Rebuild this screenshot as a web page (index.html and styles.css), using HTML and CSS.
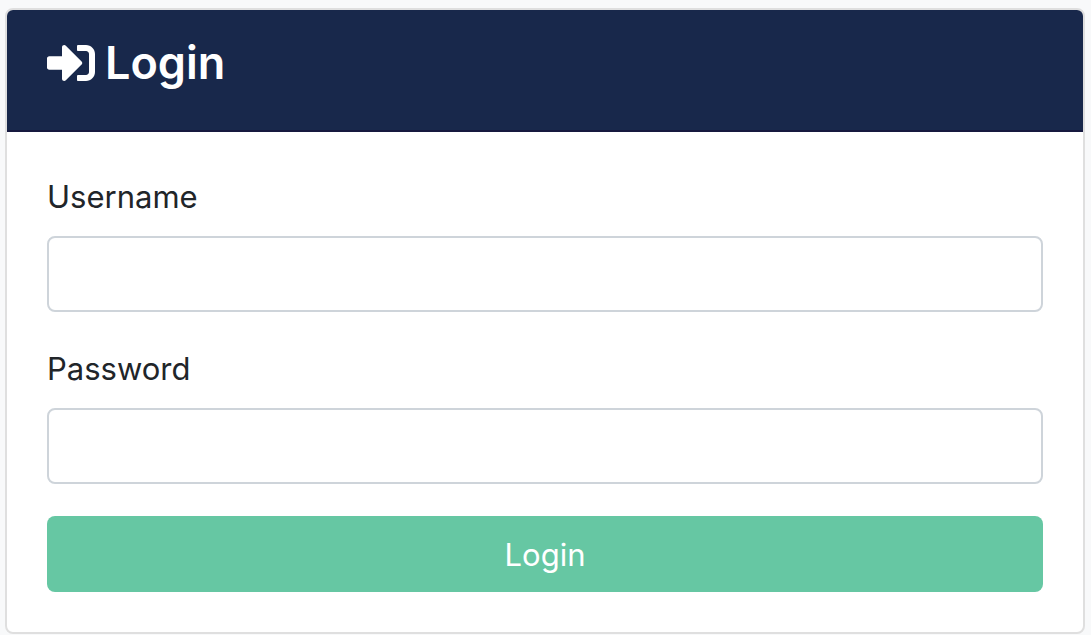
FILE: index.html
```html
<!DOCTYPE html>
<html lang="en">
<head>
<meta charset="utf-8">
<title>Login</title>
<link rel="stylesheet" href="styles.css">
</head>
<body>
<main class="card">
  <header class="card-header">
    <svg class="card-icon" viewBox="0 0 512 512" aria-hidden="true"><path fill="currentColor" d="M416 448h-84c-6.600 0-12-5.400-12-12v-40c0-6.600 5.400-12 12-12h84c17.700 0 32-14.300 32-32V160c0-17.700-14.300-32-32-32h-84c-6.600 0-12-5.400-12-12V76c0-6.600 5.400-12 12-12h84c53 0 96 43 96 96v192c0 53-43 96-96 96zm-47-209L201 71c-15-15-41-4.500-41 17v96H24c-13.300 0-24 10.700-24 24v96c0 13.300 10.700 24 24 24h136v96c0 21.500 26 32 41 17l168-168c9.300-9.400 9.300-24.600 0-34z"/></svg>
    <h1 class="card-title">Login</h1>
  </header>
  <form class="card-body">
    <div class="field">
      <label class="label" for="username">Username</label>
      <input class="input" id="username" type="text">
    </div>
    <div class="field">
      <label class="label" for="password">Password</label>
      <input class="input" id="password" type="password">
    </div>
    <button class="button" type="submit">Login</button>
  </form>
</main>
</body>
</html>
```

FILE: styles.css
```css
* {
  box-sizing: border-box;
}

body {
  margin: 0;
  padding: 8px 6px 1px 5px;
  background: #f8f9fa;
  color: #212529;
  font-family: Inter, "Liberation Sans", sans-serif;
  font-size: 31px;
  line-height: 50px;
}

.card {
  background: #fff;
  border: 2px solid #dfdfdf;
  border-radius: 8px;
  overflow: hidden;
}

.card-header {
  display: flex;
  align-items: center;
  gap: 10px;
  padding: 24px 40px 38px;
  border-bottom: 2px solid #16193f;
  background: #18284b;
  color: #fff;
}

.card-icon {
  width: 48px;
  height: 48px;
}

.card-title {
  margin: 0;
  font-size: 45px;
  font-weight: 600;
  line-height: 58px;
}

.card-body {
  display: flex;
  flex-direction: column;
  gap: 32px;
  padding: 40px;
}

.field {
  display: flex;
  flex-direction: column;
  gap: 14px;
}

.input {
  width: 100%;
  height: 76px;
  padding: 12px 24px;
  border: 2px solid #ced4da;
  border-radius: 8px;
  background: #fff;
  color: inherit;
  font: inherit;
}

.button {
  height: 76px;
  padding: 2px 24px 0;
  border: 0;
  border-radius: 8px;
  background: #66c7a3;
  color: #fff;
  font: inherit;
  cursor: pointer;
}
```
